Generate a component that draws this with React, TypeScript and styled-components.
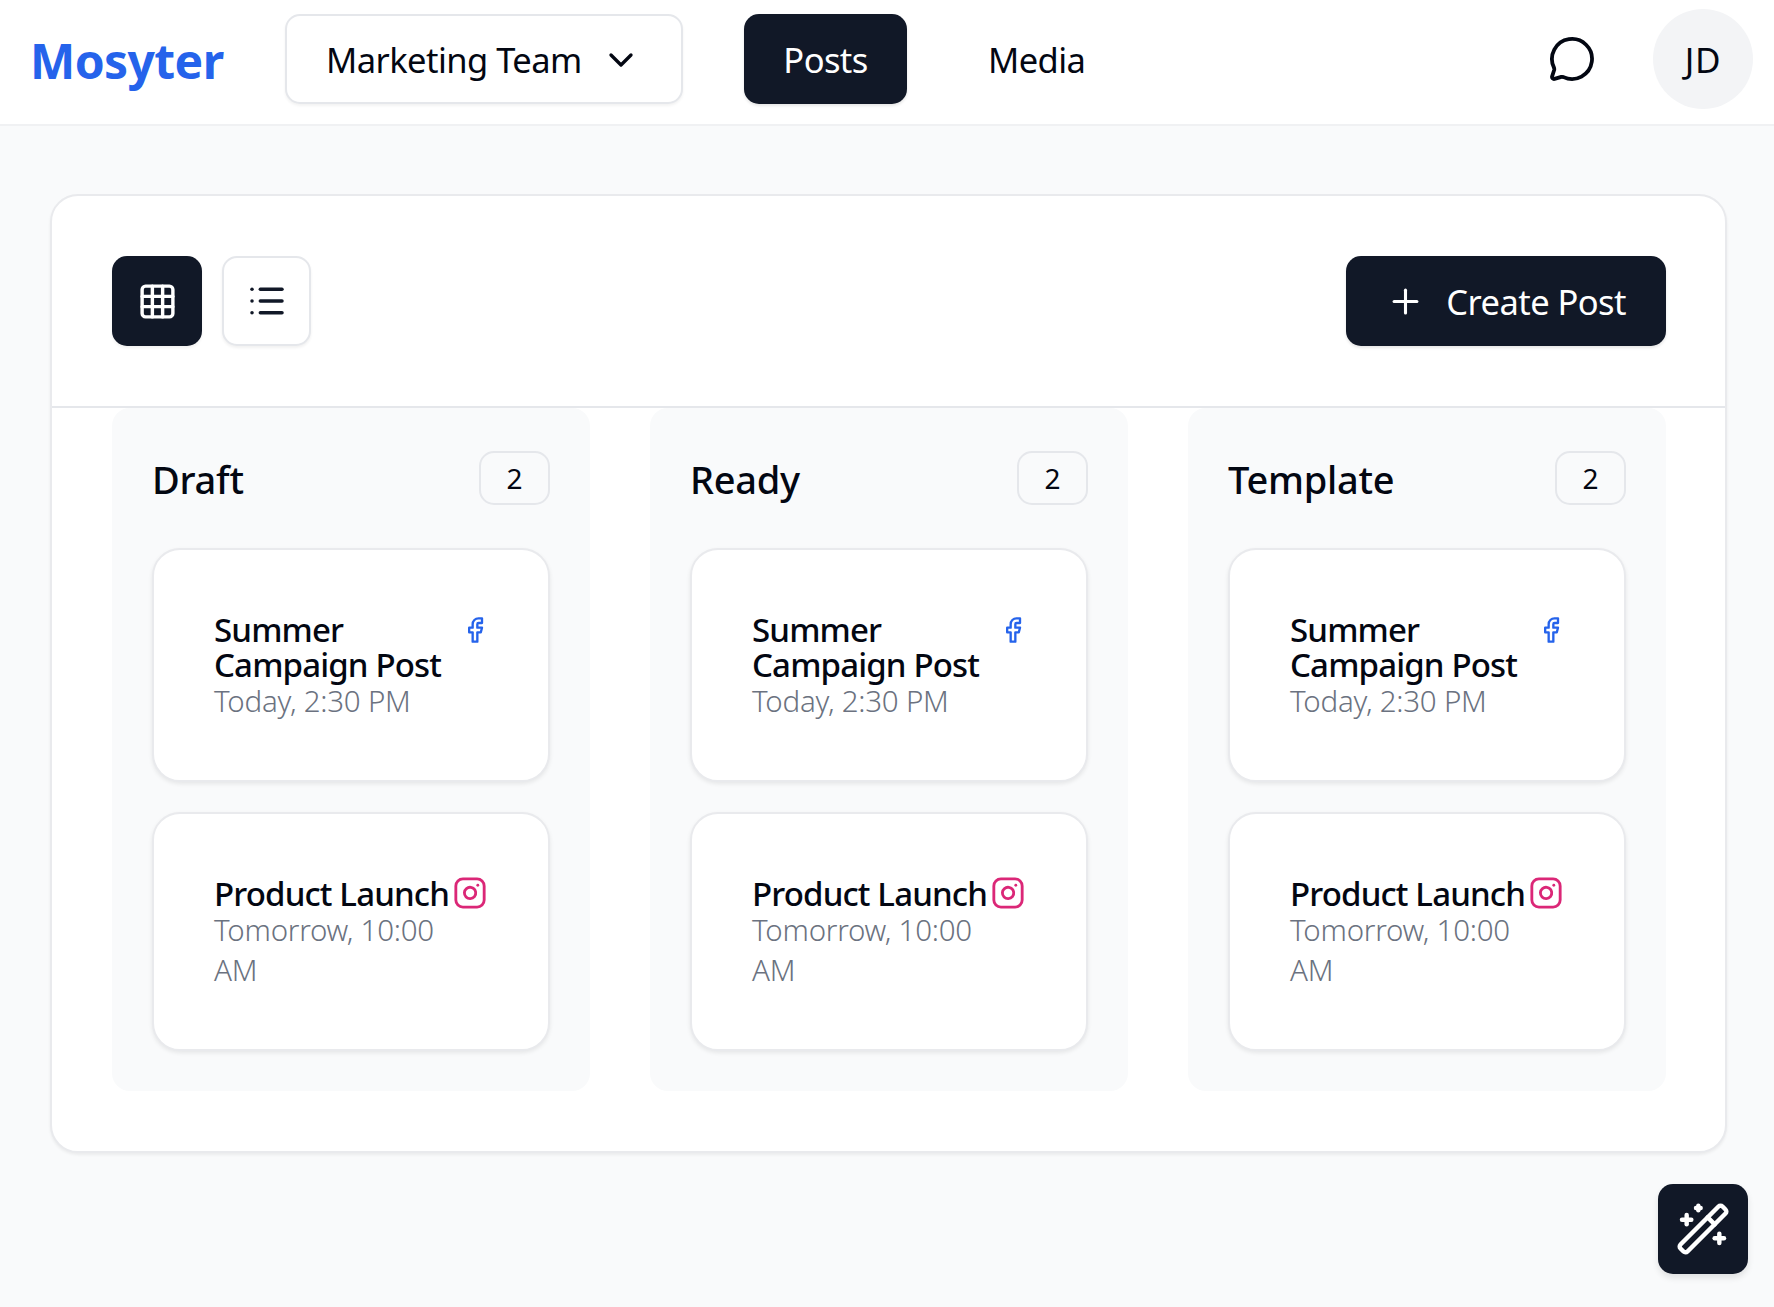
import React from "react";
import styled, { createGlobalStyle } from "styled-components";
import { ChevronDown, Facebook, Grid3x3, Instagram, List, MessageCircle, Plus, WandSparkles } from "lucide-react";

const Global = createGlobalStyle`
  html, body { margin: 0; padding: 0; background: #f9fafb; }
  body { font-family: "Noto Sans", "Open Sans", sans-serif; color: #030712; min-height: 1307px; }
  * { box-sizing: border-box; }
  button { font-family: inherit; }
`;

const Header = styled.header`
  display: flex; align-items: center; height: 126px; padding: 9px 21px 15px 30px;
  background: #fff; border-bottom: 2px solid #f0f1f3;
`;
const Logo = styled.div`
  width: 194px; margin-right: 61px; padding-top: 4px; font-size: 48px; font-weight: 700; color: #2563eb; letter-spacing: -0.6px; line-height: 1;
`;
const TeamSelect = styled.button`
  display: flex; align-items: center; justify-content: space-between; width: 398px; height: 90px; padding: 1px 40px 0 39px; margin-right: 61px;
  background: #fff; border: 2px solid #e5e7eb; border-radius: 15px; box-shadow: 0 2px 3px rgba(0,0,0,.05);
  font-size: 34.5px; font-weight: 450; color: #030712; letter-spacing: -0.55px; white-space: nowrap;
`;
const NavButton = styled.button<{ $active?: boolean }>`
  height: 90px; padding: 0; border: 0; border-radius: 15px; font-size: 34.5px; font-weight: 450; letter-spacing: -0.6px;
  width: ${p => (p.$active ? "163px" : "auto")};
  margin: ${p => (p.$active ? "0 81px 0 0" : "0")};
  background: ${p => (p.$active ? "#111827" : "transparent")};
  color: ${p => (p.$active ? "#fff" : "#030712")};
  box-shadow: ${p => (p.$active ? "0 2px 3px rgba(0,0,0,.1)" : "none")};
`;
const Spacer = styled.div`flex: 1;`;
const IconButton = styled.button`
  display: flex; align-items: center; justify-content: center; width: 48px; height: 48px; padding: 0; margin-right: 57px;
  background: none; border: 0; color: #030712;
`;
const Avatar = styled.div`
  display: flex; align-items: center; justify-content: center; width: 100px; height: 100px; border-radius: 50%;
  background: #f3f4f6; font-size: 35px; font-weight: 450; letter-spacing: 0.6px; color: #030712;
`;
const Main = styled.main`
  padding: 68px 47px 0 50px;
`;
const Board = styled.section`
  background: #fff; border: 2px solid #e9eaed; border-radius: 28px; box-shadow: 0 2px 3px rgba(0,0,0,.06);
`;
const Toolbar = styled.div`
  display: flex; align-items: center; gap: 20px; padding: 60px 59px 60px 60px; border-bottom: 2px solid #e5e7eb;
`;
const ViewButton = styled.button<{ $active?: boolean }>`
  display: flex; align-items: center; justify-content: center; height: 90px; padding: 0;
  width: ${p => (p.$active ? "90px" : "89px")};
  background: ${p => (p.$active ? "#111827" : "#fff")};
  color: ${p => (p.$active ? "#fff" : "#111827")};
  border: ${p => (p.$active ? "0" : "2px solid #e5e7eb")};
  border-radius: 15px; box-shadow: 0 2px 3px rgba(0,0,0,.06);
`;
const CreateButton = styled.button`
  display: flex; align-items: center; gap: 21px; height: 90px; padding: 0 40px; margin-left: auto;
  background: #111827; color: #fff; border: 0; border-radius: 15px; box-shadow: 0 2px 3px rgba(0,0,0,.1);
  font-size: 34.5px; font-weight: 450; letter-spacing: -0.55px; white-space: nowrap;
`;
const Columns = styled.div`
  display: grid; grid-template-columns: repeat(3, 478px); gap: 60px; padding: 0 59px 60px 60px;
`;
const Column = styled.div`
  display: flex; flex-direction: column; padding: 40px; background: #f9fafb; border-radius: 18px;
`;
const ColumnHead = styled.div`
  display: flex; align-items: center; justify-content: space-between; height: 59px; margin-bottom: 41px;
`;
const ColumnTitle = styled.h2`
  margin: 2px 0 0; font-size: 38px; font-weight: 500; letter-spacing: -0.25px; color: #030712;
`;
const CountBadge = styled.span`
  display: flex; align-items: center; justify-content: center; width: 71px; height: 54px;
  border: 2px solid #e5e7eb; border-radius: 15px; font-size: 28px; color: #030712;
`;
const CardList = styled.div`
  display: flex; flex-direction: column; gap: 30px;
`;
const PostCard = styled.article`
  padding: 62px 60px 59px 60px; background: #fff; border: 2px solid #e9eaed; border-radius: 28px; box-shadow: 0 2px 4px rgba(0,0,0,.08);
`;
const PostTop = styled.div`
  display: flex; align-items: flex-start; justify-content: space-between; gap: 2px;
`;
const PostTitle = styled.h3`
  margin: 0; font-size: 33px; font-weight: 500; line-height: 35px; letter-spacing: -0.85px; color: #030712;
`;
const PostDate = styled.p`
  max-width: 250px; margin: -1px 0 0; font-size: 29.5px; font-weight: 350; line-height: 40px; letter-spacing: -0.25px; color: #6b7280;
`;
const BrandSlot = styled.span<{ $x: number; $y: number }>`
  display: flex; flex: none; margin: ${p => p.$y}px ${p => -p.$x}px 0 0;
`;
const FloatButton = styled.button`
  position: fixed; right: 26px; bottom: 33px; display: flex; align-items: center; justify-content: center;
  width: 90px; height: 90px; padding: 0; background: #111827; color: #fff; border: 0; border-radius: 15px;
  box-shadow: 0 4px 6px rgba(0,0,0,.1);
`;

const columns = ["Draft", "Ready", "Template"];

export default function App() {
  return (
    <>
      <Global />
      <Header>
        <Logo>Mosyter</Logo>
        <TeamSelect>
          Marketing Team
          <ChevronDown size={40} strokeWidth={2} />
        </TeamSelect>
        <NavButton $active>Posts</NavButton>
        <NavButton>Media</NavButton>
        <Spacer />
        <IconButton aria-label="Messages">
          <MessageCircle size={48} strokeWidth={1.9} />
        </IconButton>
        <Avatar>JD</Avatar>
      </Header>
      <Main>
        <Board>
          <Toolbar>
            <ViewButton $active aria-label="Grid view">
              <Grid3x3 size={41} strokeWidth={2} />
            </ViewButton>
            <ViewButton aria-label="List view">
              <List size={40} strokeWidth={2.1} />
            </ViewButton>
            <CreateButton>
              <Plus size={39} strokeWidth={1.9} />
              Create Post
            </CreateButton>
          </Toolbar>
          <Columns>
            {columns.map(name => (
              <Column key={name}>
                <ColumnHead>
                  <ColumnTitle>{name}</ColumnTitle>
                  <CountBadge>2</CountBadge>
                </ColumnHead>
                <CardList>
                  <PostCard>
                    <PostTop>
                      <PostTitle>Summer Campaign Post</PostTitle>
                      <BrandSlot $x={1} $y={4}>
                        <Facebook size={28} strokeWidth={2} color="#2563eb" />
                      </BrandSlot>
                    </PostTop>
                    <PostDate>Today, 2:30 PM</PostDate>
                  </PostCard>
                  <PostCard>
                    <PostTop>
                      <PostTitle>Product Launch</PostTitle>
                      <BrandSlot $x={-1} $y={0}>
                        <Instagram size={34} strokeWidth={2} color="#db2777" />
                      </BrandSlot>
                    </PostTop>
                    <PostDate>Tomorrow, 10:00 AM</PostDate>
                  </PostCard>
                </CardList>
              </Column>
            ))}
          </Columns>
        </Board>
      </Main>
      <FloatButton aria-label="AI assistant">
        <WandSparkles size={56} strokeWidth={1.9} />
      </FloatButton>
    </>
  );
}
